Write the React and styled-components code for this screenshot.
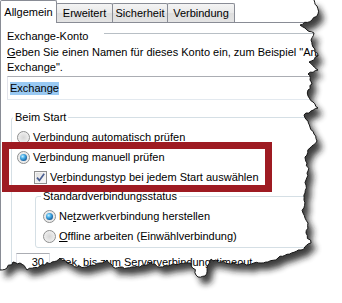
import React from 'react';
import styled, { createGlobalStyle } from 'styled-components';

const GlobalStyle = createGlobalStyle`
  body {
    margin: 0;
    background: #fff;
    font-family: "Liberation Sans", Arial, sans-serif;
  }
`;

const Screen = styled.div`
  position: relative;
  width: 342px;
  height: 303px;
  overflow: hidden;
  background: #fff;
  color: #000;
  font-size: 11px;
`;

const TabStrip = styled.div`
  display: flex;
  align-items: flex-end;
  height: 22px;
  position: relative;
  z-index: 1;
`;

const Tab = styled.div`
  box-sizing: border-box;
  display: flex;
  align-items: center;
  justify-content: center;
  width: ${p => p.$w}px;
  height: ${p => (p.$active ? 23 : 19)}px;
  margin-bottom: ${p => (p.$active ? -1 : 0)}px;
  margin-left: ${p => (p.$first ? 0 : -1)}px;
  padding-bottom: ${p => (p.$active ? 1 : 0)}px;
  border: 1px solid #898c95;
  border-bottom: none;
  border-radius: 2px 2px 0 0;
  background: ${p => (p.$active ? '#fff' : 'linear-gradient(#f4f4f4, #e9e9e9 48%, #dedede 52%, #e4e4e4)')};
  position: relative;
  z-index: ${p => (p.$active ? 2 : 1)};
`;

const Panel = styled.div`
  border-top: 1px solid #898c95;
  border-left: 1px solid #898c95;
  padding-left: 6px;
  height: 300px;
`;

const HeaderRow = styled.div`
  display: flex;
  align-items: center;
  height: 14px;
  margin-top: 6px;
`;

const HeaderLine = styled.div`
  flex: 1;
  height: 1px;
  background: #b8bfc5;
  margin: 0 0 6px 16px;
`;

const Description = styled.div`
  margin-top: 2px;
  line-height: 15px;
  white-space: nowrap;
`;

const TextBox = styled.div`
  box-sizing: border-box;
  display: flex;
  align-items: center;
  width: 330px;
  height: 24px;
  margin-top: 1px;
  padding: 0 2px;
  border: 1px solid;
  border-color: #abadb3 #dbdfe6 #e3e9ef #e2e3ea;
`;

const Selected = styled.span`
  background: #99c9f2;
  line-height: 13px;
`;

const GroupBox = styled.fieldset`
  margin: ${p => p.$mt}px 0 0 ${p => p.$ml}px;
  padding: 3px 0 ${p => p.$pb}px ${p => p.$pl}px;
  border: 1px solid #d5dfe5;
  border-radius: 3px;
  min-width: 0;
`;

const Legend = styled.legend`
  padding: 0 2px;
  margin-left: ${p => p.$ml}px;
  line-height: 14px;
`;

const OptionRow = styled.label`
  display: flex;
  align-items: center;
  gap: 3px;
  height: 20px;
  margin-left: ${p => p.$indent || 0}px;
  white-space: nowrap;
`;

const Radio = styled.span`
  box-sizing: border-box;
  position: relative;
  flex: none;
  width: 13px;
  height: 13px;
  border-radius: 50%;
  border: 1px solid #8e8f8f;
  background: radial-gradient(circle at 50% 50%, #d6d6d6 0, #e9e9e9 55%, #fbfbfb 100%);

  &::after {
    content: '';
    display: ${p => (p.$checked ? 'block' : 'none')};
    position: absolute;
    left: 2px;
    top: 2px;
    width: 7px;
    height: 7px;
    border-radius: 50%;
    background: radial-gradient(circle at 38% 35%, #c8f0ff 0, #45ace6 35%, #145c9c 75%, #0b3f73 100%);
  }
`;

const Check = styled.span`
  box-sizing: border-box;
  flex: none;
  display: flex;
  width: 13px;
  height: 13px;
  border: 1px solid #8f8f8f;
  background: linear-gradient(135deg, #dcdcdc, #fbfbfb);
  box-shadow: inset 0 0 0 1px #f4f4f4;

  svg {
    width: 11px;
    height: 11px;
  }
`;

const Key = styled.span`
  text-decoration: underline;
  text-underline-offset: 1px;
`;

const TimeoutRow = styled.div`
  display: flex;
  align-items: center;
  height: 20px;
  margin: 4px 0 0 -1px;
  white-space: nowrap;
`;

const SpinBox = styled.div`
  box-sizing: border-box;
  width: 34px;
  height: 19px;
  padding-right: 5px;
  border: 1px solid;
  border-color: #abadb3 #dbdfe6 #e3e9ef #e2e3ea;
  text-align: right;
  line-height: 17px;
  margin-right: 8px;
`;

const Highlight = styled.div`
  position: absolute;
  left: 2px;
  top: 142px;
  width: 270px;
  height: 50px;
  box-sizing: border-box;
  border: 7px solid #9e1b22;
  z-index: 5;
`;

const TornEdge = styled.svg`
  position: absolute;
  left: 0;
  top: 0;
  width: 342px;
  height: 303px;
  z-index: 10;
  pointer-events: none;
`;

const edgePoints = [
  [314, 0], [317, 6], [318, 14], [312, 20], [300, 25], [305, 28], [314, 33], [311, 40],
  [313, 47], [318, 56], [309, 62], [318, 70], [308, 74], [310, 80], [312, 84], [308, 90],
  [308, 96], [313, 102], [318, 108], [304, 115], [308, 121], [310, 127], [314, 134],
  [317, 141], [310, 148], [305, 157], [307, 163], [308, 171], [306, 180], [305, 193],
  [304, 200], [303, 213], [308, 223], [306, 233], [311, 243], [301, 250], [278, 258],
  [268, 262], [254, 263], [238, 265], [221, 262], [211, 259], [205, 276], [198, 277],
  [191, 263], [171, 265], [160, 267], [150, 263], [140, 267], [127, 268], [113, 267],
  [107, 260], [100, 263], [87, 267], [77, 267], [67, 263], [60, 258], [52, 262],
  [40, 266], [27, 270], [20, 263], [13, 262], [7, 268], [0, 270],
];

function roughen(pts) {
  let seed = 11;
  const rnd = () => {
    seed = (seed * 9301 + 49297) % 233280;
    return seed / 233280;
  };
  const out = [];
  for (let i = 0; i < pts.length - 1; i++) {
    const [x1, y1] = pts[i];
    const [x2, y2] = pts[i + 1];
    const len = Math.hypot(x2 - x1, y2 - y1);
    const n = Math.max(1, Math.round(len / 2.5));
    const nx = -(y2 - y1) / len;
    const ny = (x2 - x1) / len;
    for (let k = 0; k < n; k++) {
      const t = k / n;
      const j = k === 0 ? 0 : (rnd() - 0.5) * 2.4;
      out.push([x1 + (x2 - x1) * t + nx * j, y1 + (y2 - y1) * t + ny * j]);
    }
  }
  out.push(pts[pts.length - 1]);
  return out.map(([x, y]) => `${x.toFixed(1)} ${y.toFixed(1)}`).join(' L');
}

const edge = roughen(edgePoints);
const paper = `M0 0 L${edge} Z`;
const outside = `M0 0H342V303H0Z ${paper}`;

function Paper() {
  return (
    <TornEdge viewBox="0 0 342 303">
      <defs>
        <clipPath id="outside">
          <path d={outside} clipRule="evenodd" />
        </clipPath>
        <filter id="soft" x="-10%" y="-10%" width="130%" height="130%">
          <feGaussianBlur stdDeviation="3" />
        </filter>
      </defs>
      <path d={outside} fill="#fff" fillRule="evenodd" />
      <g clipPath="url(#outside)">
        <path d={paper} fill="#1a1a1a" opacity="0.85" filter="url(#soft)" transform="translate(5 7)" />
      </g>
      <path d={`M${edge}`} fill="none" stroke="#161616" strokeWidth="1" />
    </TornEdge>
  );
}

export default function App() {
  const tabs = [
    { title: 'Allgemein', w: 57, active: true },
    { title: 'Erweitert', w: 57 },
    { title: 'Sicherheit', w: 56 },
    { title: 'Verbindung', w: 68 },
  ];

  return (
    <Screen>
      <GlobalStyle />
      <TabStrip>
        {tabs.map((tab, i) => (
          <Tab key={tab.title} $w={tab.w} $active={tab.active} $first={i === 0}>{tab.title}</Tab>
        ))}
      </TabStrip>
      <Panel>
        <HeaderRow>
          Exchange-Konto
          <HeaderLine />
        </HeaderRow>
        <Description>
          <Key>G</Key>eben Sie einen Namen für dieses Konto ein, zum Beispiel "Arbeit" oder "Microsoft<br />
          Exchange".
        </Description>
        <TextBox>
          <Selected>Exchange</Selected>
        </TextBox>

        <GroupBox $mt={10} $ml={4} $pl={5} $pb={20}>
          <Legend $ml={-4}>Beim Start</Legend>
          <OptionRow>
            <Radio />
            <span>Verbindung <Key>a</Key>utomatisch prüfen</span>
          </OptionRow>
          <OptionRow>
            <Radio $checked />
            <span>V<Key>e</Key>rbindung manuell prüfen</span>
          </OptionRow>
          <OptionRow $indent={17}>
            <Check>
              <svg viewBox="0 0 11 11">
                <path d="M2 5.6 L4.4 8.4 L9.2 1.8" fill="none" stroke="#4a5f92" strokeWidth="1.7" />
              </svg>
            </Check>
            <span>Ve<Key>r</Key>bindungstyp bei jedem Start auswählen</span>
          </OptionRow>

          <GroupBox $mt={2} $ml={18} $pl={7} $pb={1}>
            <Legend $ml={-2}>Standardverbindungsstatus</Legend>
            <OptionRow>
              <Radio $checked />
              <span>Ne<Key>t</Key>zwerkverbindung herstellen</span>
            </OptionRow>
            <OptionRow>
              <Radio />
              <span><Key>O</Key>ffline arbeiten (Einwählverbindung)</span>
            </OptionRow>
          </GroupBox>

          <TimeoutRow>
            <SpinBox>30</SpinBox>
            Sek. bis zum Serververbindungstimeout
          </TimeoutRow>
        </GroupBox>
      </Panel>
      <Highlight />
      <Paper />
    </Screen>
  );
}
